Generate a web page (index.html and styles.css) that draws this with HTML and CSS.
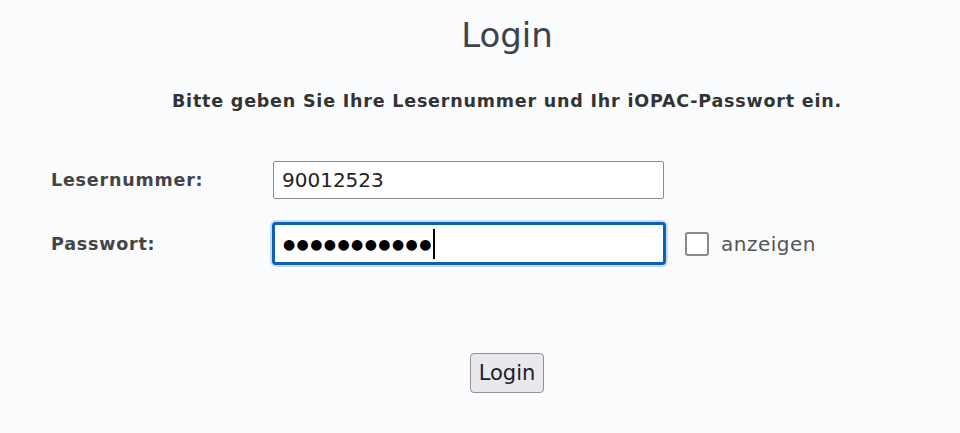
FILE: index.html
```html
<!DOCTYPE html>
<html lang="de">
<head>
  <meta charset="UTF-8">
  <title>Login</title>
  <link rel="stylesheet" href="styles.css">
</head>
<body>
  <div class="page">
    <h1 class="title">Login</h1>
    <p class="hint">Bitte geben Sie Ihre Lesernummer und Ihr iOPAC-Passwort ein.</p>

    <form class="login-form">
      <div class="row">
        <label class="label" for="nr">Lesernummer:</label>
        <input class="field" id="nr" type="text" value="90012523">
      </div>
      <div class="row">
        <label class="label" for="pw">Passwort:</label>
        <div class="field focused"><span class="dots">&#9679;&#9679;&#9679;&#9679;&#9679;&#9679;&#9679;&#9679;&#9679;&#9679;&#9679;</span><span class="caret"></span></div>
        <label class="show">
          <span class="box"></span>
          anzeigen
        </label>
      </div>
      <div class="actions">
        <button class="login-button" type="button">Login</button>
      </div>
    </form>
  </div>
</body>
</html>
```

FILE: styles.css
```css
body {
  margin: 0;
  background-color: #f9fbfd;
  font-family: "DejaVu Sans", Verdana, sans-serif;
  color: #333;
}

.page {
  margin-left: 54px;
  width: 906px;
  padding-top: 15px;
}

.title {
  margin: 0;
  text-align: center;
  font-size: 34px;
  font-weight: normal;
  color: #3d434b;
  line-height: 40px;
}

.hint {
  margin: 36px 0 0;
  text-align: center;
  font-size: 17.5px;
  font-weight: bold;
  letter-spacing: 0.8px;
  color: #333;
}

.login-form {
  margin-top: 50px;
}

.row {
  display: flex;
  align-items: center;
  margin-bottom: 23px;
}

.label {
  width: 222px;
  margin-left: -3px;
  font-size: 17.5px;
  font-weight: bold;
  letter-spacing: 0.8px;
  color: #444;
}

.field {
  box-sizing: border-box;
  width: 391px;
  height: 38px;
  margin: 0;
  padding: 0 8px;
  border: 1px solid #8d8d8d;
  border-radius: 2px;
  background: #fff;
  font-family: "DejaVu Sans", Verdana, sans-serif;
  font-size: 20px;
  color: #222;
  outline: none;
}

.field.focused {
  display: flex;
  align-items: center;
  width: 394px;
  height: 43px;
  margin-left: -1px;
  border: 3px solid #0d5fb8;
  border-radius: 4px;
  box-shadow: 0 0 0 2px #c5dcf2;
  padding-left: 8px;
}

.dots {
  font-size: 14px;
  letter-spacing: 1.4px;
  color: #000;
}

.caret {
  width: 2px;
  height: 30px;
  background: #000;
}

.show {
  display: flex;
  align-items: center;
  gap: 12px;
  margin-left: 19px;
  font-size: 20px;
  color: #555;
  letter-spacing: 0.5px;
}

.box {
  width: 20px;
  height: 20px;
  border: 2px solid #8a8a8a;
  border-radius: 3px;
  background: #fff;
}

/* margin collapses with the row's bottom margin */
.actions {
  margin-top: 88px;
  text-align: center;
}

.login-button {
  height: 40px;
  padding: 0 8px;
  border: 1px solid #8f8f9d;
  border-radius: 4px;
  background-color: #e9e9ed;
  font-family: "DejaVu Sans", Verdana, sans-serif;
  font-size: 21px;
  color: #1d1d2b;
}
```
